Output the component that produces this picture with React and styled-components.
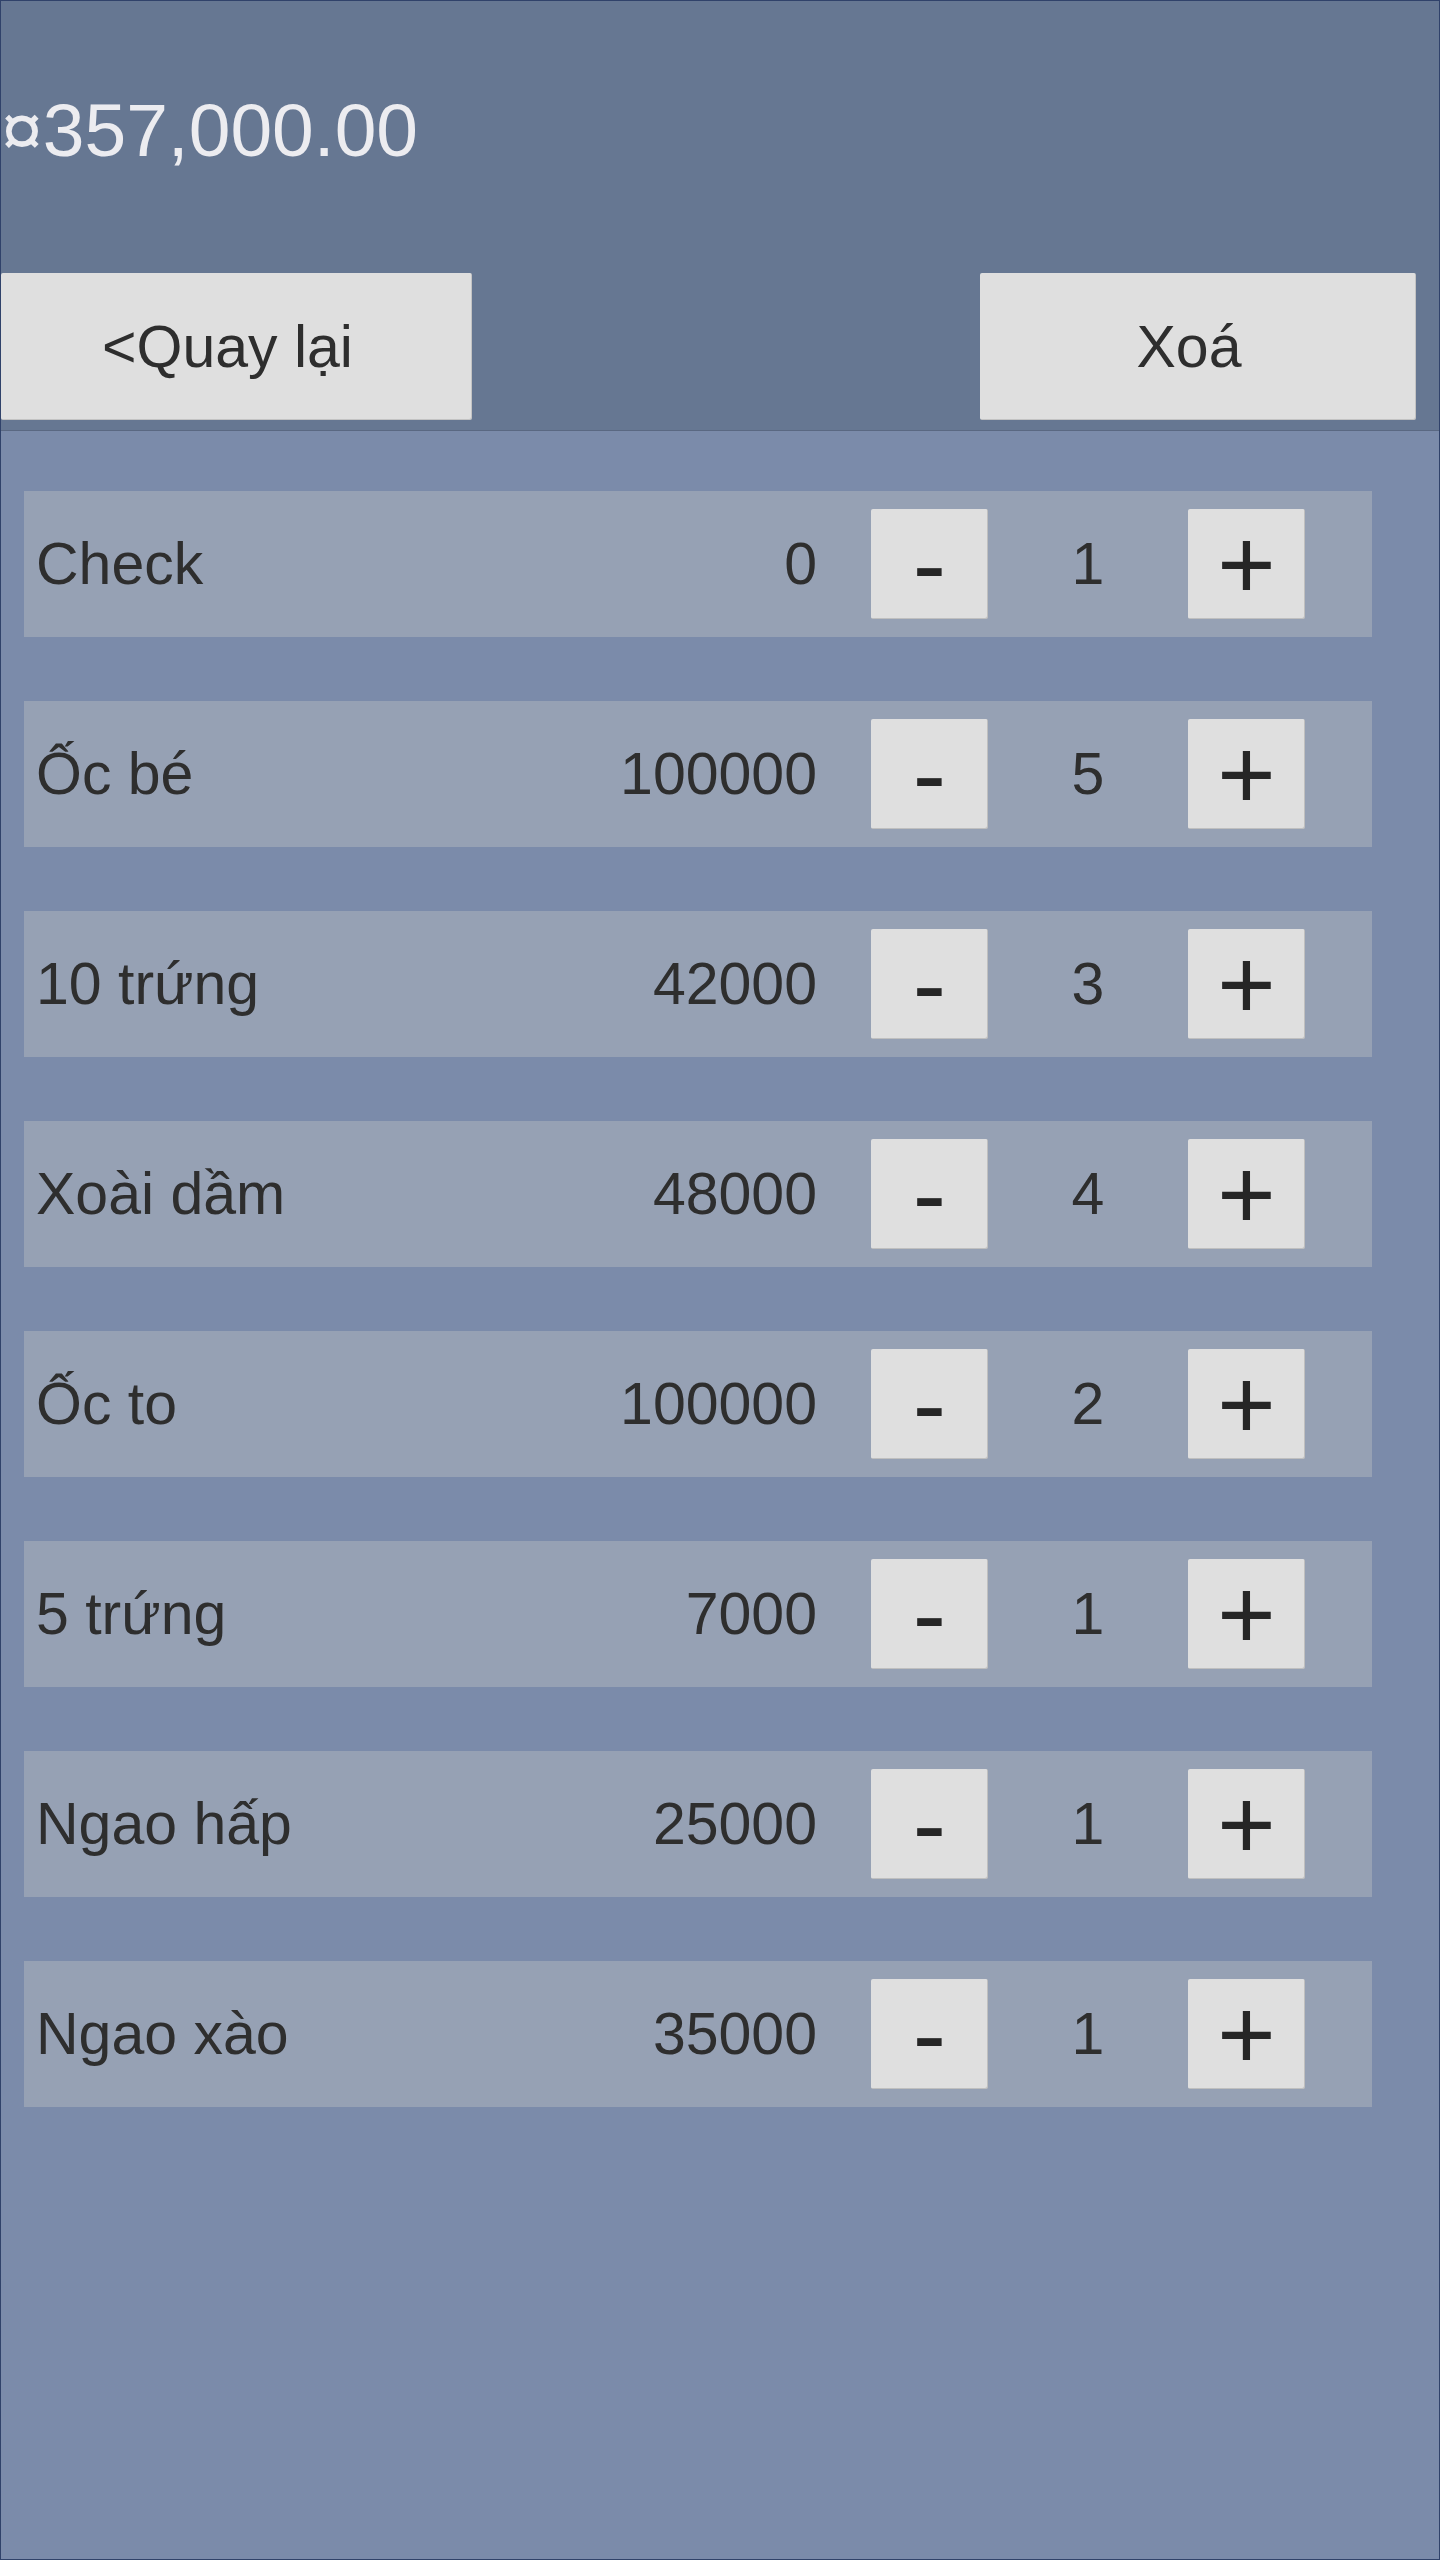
import React from "react";
import styled, { createGlobalStyle } from "styled-components";

const GlobalStyle = createGlobalStyle`
  html, body {
    margin: 0;
    padding: 0;
    background: #7b8baa;
  }
  body {
    font-family: "Liberation Sans", Arial, sans-serif;
  }
  * { box-sizing: border-box; }
`;

const Screen = styled.div`
  width: 1440px;
  height: 2560px;
  border: 1px solid #30426a;
  background: #7b8baa;
  display: flex;
  flex-direction: column;
  overflow: hidden;
`;

const Header = styled.header`
  height: 430px;
  flex: none;
  background: #667792;
  border-bottom: 1px solid #5a6882;
  display: flex;
  flex-direction: column;
`;

const Total = styled.div`
  height: 272px;
  display: flex;
  align-items: center;
  padding: 0 0 15px 0;
  font-size: 75px;
  color: #ececf0;
  white-space: nowrap;
`;

const ButtonBar = styled.div`
  display: flex;
  justify-content: space-between;
  align-items: flex-start;
  padding-right: 23px;
`;

const HeaderButton = styled.button`
  width: ${(p) => p.$w}px;
  height: 147px;
  border: none;
  border-radius: 2px;
  background: #dfdfdf;
  box-shadow: inset -1px -1px 0 rgba(0, 0, 0, 0.12);
  font-family: "Liberation Sans", Arial, sans-serif;
  font-size: 59px;
  color: #2e2e2e;
  padding: 0 18px 0 0;
  display: flex;
  align-items: center;
  justify-content: center;
  cursor: pointer;
`;

const List = styled.main`
  display: flex;
  flex-direction: column;
  gap: 64px;
  padding: 60px 0 0 23px;
`;

const Row = styled.div`
  width: 1348px;
  height: 146px;
  background: #96a1b4;
  display: flex;
  align-items: center;
  padding: 0 67px 0 12px;
  font-size: 59px;
  color: #2e2e2e;
`;

const Name = styled.div`
  flex: 1;
  white-space: nowrap;
`;

const Price = styled.div`
  text-align: right;
  margin-right: 54px;
`;

const StepButton = styled.button`
  width: 117px;
  height: 110px;
  flex: none;
  border: none;
  border-radius: 2px;
  background: #dfdfdf;
  box-shadow: inset -1px -1px 0 rgba(0, 0, 0, 0.14);
  font-family: "Liberation Sans", Arial, sans-serif;
  font-size: 100px;
  line-height: normal;
  color: #262626;
  padding: 0;
  display: flex;
  align-items: center;
  justify-content: center;
  cursor: pointer;
`;

const Qty = styled.div`
  width: 200px;
  text-align: center;
`;

const items = [
  { name: "Check", price: 0, qty: 1 },
  { name: "Ốc bé", price: 100000, qty: 5 },
  { name: "10 trứng", price: 42000, qty: 3 },
  { name: "Xoài dầm", price: 48000, qty: 4 },
  { name: "Ốc to", price: 100000, qty: 2 },
  { name: "5 trứng", price: 7000, qty: 1 },
  { name: "Ngao hấp", price: 25000, qty: 1 },
  { name: "Ngao xào", price: 35000, qty: 1 },
];

export default function App() {
  return (
    <>
      <GlobalStyle />
      <Screen>
        <Header>
          <Total>¤357,000.00</Total>
          <ButtonBar>
            <HeaderButton $w={471}>&lt;Quay lại</HeaderButton>
            <HeaderButton $w={436}>Xoá</HeaderButton>
          </ButtonBar>
        </Header>
        <List>
          {items.map((it) => (
            <Row key={it.name}>
              <Name>{it.name}</Name>
              <Price>{it.price}</Price>
              <StepButton>-</StepButton>
              <Qty>{it.qty}</Qty>
              <StepButton>+</StepButton>
            </Row>
          ))}
        </List>
      </Screen>
    </>
  );
}
